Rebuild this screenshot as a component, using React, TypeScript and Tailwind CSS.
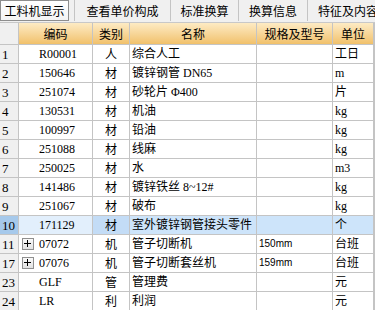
import { Fragment } from 'react';

interface Row { no: string; code: string; kind: string; name: string; spec?: string; unit: string; plus?: boolean; sel?: boolean }

const rows: Row[] = [
  { no: '1', code: 'R00001', kind: '人', name: '综合人工', unit: '工日' },
  { no: '2', code: '150646', kind: '材', name: '镀锌钢管 DN65', unit: 'm' },
  { no: '3', code: '251074', kind: '材', name: '砂轮片 Φ400', unit: '片' },
  { no: '4', code: '130531', kind: '材', name: '机油', unit: 'kg' },
  { no: '5', code: '100997', kind: '材', name: '铅油', unit: 'kg' },
  { no: '6', code: '251088', kind: '材', name: '线麻', unit: 'kg' },
  { no: '7', code: '250025', kind: '材', name: '水', unit: 'm3' },
  { no: '8', code: '141486', kind: '材', name: '镀锌铁丝 8~12#', unit: 'kg' },
  { no: '9', code: '251067', kind: '材', name: '破布', unit: 'kg' },
  { no: '10', code: '171129', kind: '材', name: '室外镀锌钢管接头零件', unit: '个', sel: true },
  { no: '11', code: '07072', kind: '机', name: '管子切断机', spec: '150mm', unit: '台班', plus: true },
  { no: '17', code: '07076', kind: '机', name: '管子切断套丝机', spec: '159mm', unit: '台班', plus: true },
  { no: '23', code: 'GLF', kind: '管', name: '管理费', unit: '元' },
  { no: '24', code: 'LR', kind: '利', name: '利润', unit: '元' },
];

const cjk = "font-['Liberation_Serif','Noto_Sans_CJK_SC',serif]";
const cell = 'h-[19px] border-r border-b border-[#c4c4c4] flex items-center overflow-hidden whitespace-nowrap leading-none text-black';
const head = 'h-[22px] border-r border-b border-[#c4c4c4] flex items-center justify-center text-[12px] leading-none text-black bg-gradient-to-b from-[#fdebc4] to-[#f1c16a]';

function Plus() {
  return (
    <span className="mr-[5px] ml-[2px] flex h-[12px] w-[12px] items-center justify-center border border-[#8f8f8f] bg-gradient-to-b from-[#fafafa] to-[#e2e2e2]">
      <svg width="8" height="8" viewBox="0 0 8 8"><path d="M0 3.5H7M3.5 0V7" stroke="#000" strokeWidth="1" /></svg>
    </span>
  );
}

export default function App() {
  return (
    <div className={`h-[310px] w-[375px] overflow-hidden bg-white ${cjk}`}>
      <div className="flex h-[23px] border-b border-[#c8c8c8] bg-[#f0f0f0] text-[12px] leading-none text-black font-['Noto_Sans_CJK_SC',sans-serif]">
        <div className="flex h-[21px] w-[69px] items-center justify-center border border-[#8e8e8e] bg-gradient-to-b from-white to-[#f4f4f4]">工料机显示</div>
        <div className="w-[5px]" />
        <div className="flex h-[21px] w-[96px] items-center justify-center border-l border-[#c4c4c4]">查看单价构成</div>
        <div className="flex h-[21px] w-[68px] items-center justify-center border-l border-[#c4c4c4]">标准换算</div>
        <div className="flex h-[21px] w-[69px] items-center justify-center border-l border-[#c4c4c4]">换算信息</div>
        <div className="flex h-[21px] flex-1 items-center whitespace-nowrap border-l border-[#c4c4c4] pl-[10px] overflow-hidden">特征及内容</div>
      </div>

      <div className="grid grid-cols-[19px_74px_37px_127px_76px_41px_1fr]">
        <div className="h-[22px] border-r border-b border-[#c4c4c4] bg-[#f0f0f0]" />
        <div className={`${head} font-['Noto_Sans_CJK_SC',sans-serif]`}>编码</div>
        <div className={`${head} font-['Noto_Sans_CJK_SC',sans-serif]`}>类别</div>
        <div className={`${head} font-['Noto_Sans_CJK_SC',sans-serif]`}>名称</div>
        <div className={`${head} font-['Noto_Sans_CJK_SC',sans-serif]`}>规格及型号</div>
        <div className={`${head} font-['Noto_Sans_CJK_SC',sans-serif]`}>单位</div>
        <div className={head} />

        {rows.map((r) => (
          <Fragment key={r.no}>
            <div className={`${cell} pl-[2px] text-[13px] ${r.sel ? 'bg-[#a6c9eb]' : 'bg-[#f0f0f0]'}`}>{r.no}</div>
            <div className={`${cell} text-[12px] ${r.plus ? 'pl-[1px]' : 'pl-[20px]'} ${r.sel ? 'bg-[#e2effc]' : ''}`}>
              {r.plus && <Plus />}
              {r.code}
            </div>
            <div className={`${cell} text-[12px] justify-center font-['Noto_Sans_CJK_SC',sans-serif] ${r.sel ? 'bg-[#c3dcf6]' : ''}`}>{r.kind}</div>
            <div className={`${cell} text-[12px] pl-[2px] ${r.sel ? 'bg-[#cde4fa]' : ''}`}>{r.name}</div>
            <div className={`${cell} pl-[2px] font-['Liberation_Sans',sans-serif] text-[10px] ${r.sel ? 'bg-[#cde4fa]' : ''}`}>{r.spec}</div>
            <div className={`${cell} text-[12px] pl-[2px] ${r.sel ? 'bg-[#cde4fa]' : ''}`}>{r.unit}</div>
            <div className={cell} />
          </Fragment>
        ))}
      </div>
    </div>
  );
}
